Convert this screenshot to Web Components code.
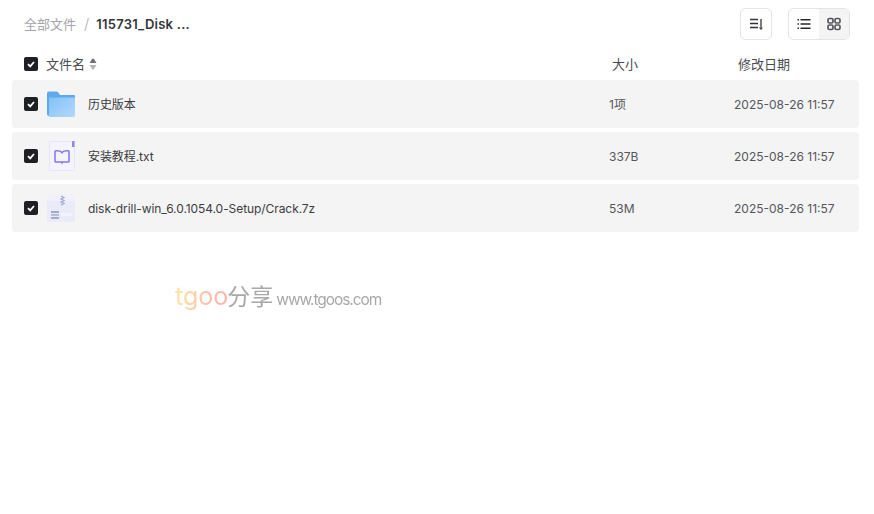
<!DOCTYPE html>
<html lang="zh">
<head>
<meta charset="utf-8">
<title>全部文件</title>
<style>
    html, body { margin: 0; height: 100%; background: #fff; }
    body { font-family: Inter, "Noto Sans CJK SC", sans-serif; color: #25262b; overflow: hidden; }
</style>
</head>
<body>
<file-page>
    <file-row slot="rows" name="历史版本" size="1项" date="2025-08-26 11:57"><file-icon kind="folder"></file-icon></file-row>
    <file-row slot="rows" name="安装教程.txt" size="337B" date="2025-08-26 11:57"><file-icon kind="text"></file-icon></file-row>
    <file-row slot="rows" name="disk-drill-win_6.0.1054.0-Setup/Crack.7z" size="53M" date="2025-08-26 11:57"><file-icon kind="zip"></file-icon></file-row>
</file-page>

<script>
const icons = {
    folder: `<svg width="30" height="28" viewBox="0 0 30 28">
        <defs><linearGradient id="f" x1="0" y1="0" x2="1" y2="1"><stop offset="0" stop-color="#84c1f7"/><stop offset="1" stop-color="#b3d9fc"/></linearGradient></defs>
        <path d="M1 3.500C1 2.400 1.800 1.500 3 1.500h7.500c.8 0 1.300.3 1.800 1l1.700 2.500h14c.6 0 1 .4 1 1V26H3c-1.200 0-2-.8-2-2z" fill="#5eaaee"/>
        <path d="M3 7.500h26V25.500c0 .8-.6 1.500-1.500 1.500H4.500C3.600 27 3 26.400 3 25.500z" fill="url(#f)"/>
        <rect x="23" y="9.500" width="4" height="2" rx="1" fill="#a4cdf4"/>
    </svg>`,
    text: `<svg width="30" height="32" viewBox="0 0 30 32">
        <path d="M3.500 1.500h25V29c0 .8-.6 1.500-1.500 1.500H5c-.9 0-1.500-.6-1.500-1.500z" fill="#f5f3ff" stroke="#e6e3fb"/>
        <rect x="26" y="1" width="2.500" height="6" rx=".6" fill="#8d86ee"/>
        <path d="M11 10.800H9.800c-.5 0-.8.300-.8.800v9.600c0 .5.300.8.800.8h12.400c.5 0 .8-.3.800-.8v-9.600c0-.5-.3-.8-.8-.8H21M16 22v1.800" fill="none" stroke="#7f78ea" stroke-width="1.500"/>
        <path d="M11 10.800c2 0 4 .4 5 1.800 1-1.400 3-1.800 5-1.800" fill="none" stroke="#7f78ea" stroke-width="1.500"/>
    </svg>`,
    zip: `<svg width="30" height="30" viewBox="0 0 30 30">
        <path d="M1 8l3.500-6.500C4.700 1.100 5 1 5.500 1h19c.5 0 .8.100 1 .5L29 8v19.500c0 1-.6 1.500-1.500 1.500h-25C1.600 29 1 28.500 1 27.500z" fill="#e9ebf8"/>
        <path d="M1 8l3.500-6.500C4.700 1.100 5 1 5.500 1h19c.5 0 .8.100 1 .5L29 8z" fill="#f0f1fa"/>
        <path d="M15 3l3 1.500-3 1.500 3 1.500-3 1.500 3 1.500-3 1.500" fill="none" stroke="#a6abcb" stroke-width="1.300"/>
        <rect x="5" y="18" width="8" height="2" fill="#a3a9c6"/>
        <rect x="5" y="21" width="8" height="2" fill="#b8bdd5"/>
        <rect x="5" y="24" width="8" height="2" fill="#a3a9c6"/>
        <rect x="15" y="20" width="11" height="3" fill="#f3f4fb"/>
    </svg>`
};

customElements.define('file-icon', class extends HTMLElement {
    constructor() {
        super();
        this.attachShadow({mode: 'open'});
    }
    connectedCallback() {
        this.shadowRoot.innerHTML = `
            <style>
                :host { display: flex; width: 30px; height: 32px; align-items: center; justify-content: center; }
                svg { display: block; }
            </style>
            ${icons[this.getAttribute('kind')]}`;
    }
});

customElements.define('check-box', class extends HTMLElement {
    constructor() {
        super();
        this.attachShadow({mode: 'open'}).innerHTML = `
            <style>
                :host { display: flex; width: 14px; height: 14px; border-radius: 2px; background: #1f2024; align-items: center; justify-content: center; flex: none; }
            </style>
            <svg width="10" height="10" viewBox="0 0 10 10"><path d="M2 5.200l2.200 2.200L8 3" fill="none" stroke="#fff" stroke-width="1.800"/></svg>`;
    }
});

customElements.define('file-row', class extends HTMLElement {
    constructor() {
        super();
        this.attachShadow({mode: 'open'});
    }
    connectedCallback() {
        this.shadowRoot.innerHTML = `
            <style>
                :host { display: grid; grid-template-columns: 585px 125px 1fr; align-items: center; height: 48px; padding-left: 12px; background: #f4f4f4; border-radius: 4px; font-size: 12px; line-height: 16px; color: #55565c; }
                .name { display: flex; align-items: center; }
                span { padding-top: 2px; }
                ::slotted(file-icon) { margin: 0 12px 0 8px; }
                .title { color: #3b3c42; letter-spacing: -.07px; }
            </style>
            <div class="name"><check-box></check-box><slot></slot><span class="title">${this.getAttribute('name')}</span></div>
            <span>${this.getAttribute('size')}</span>
            <span>${this.getAttribute('date')}</span>`;
    }
});

customElements.define('view-tools', class extends HTMLElement {
    constructor() {
        super();
        this.attachShadow({mode: 'open'}).innerHTML = `
            <style>
                :host { display: flex; gap: 16px; align-items: center; }
                .box { display: flex; height: 30px; border: 1px solid #e4e4e6; border-radius: 6px; overflow: hidden; }
                .btn { display: flex; width: 30px; height: 30px; align-items: center; justify-content: center; }
                .off { background: #f4f4f5; }
                svg { display: block; }
            </style>
            <div class="box"><div class="btn">
                <svg width="16" height="16" viewBox="0 0 16 16" fill="none" stroke="#33343a" stroke-width="1.300"><path d="M2 3.500h8M2 7.500h8M2 11.500h8M13 3v10"/><path d="M11.500 11.500L13 13.500l1.300-2" stroke-width="1"/></svg>
            </div></div>
            <div class="box"><div class="btn">
                <svg width="14" height="14" viewBox="0 0 14 14" fill="none" stroke="#25262b" stroke-width="1.400"><path d="M3.500 2.800h10M3.500 7h10M3.500 11.200h10M.5 2.800h1.500M.5 7h1.500M.5 11.200h1.500"/></svg>
            </div><div class="btn off">
                <svg width="14" height="14" viewBox="0 0 14 14" fill="none" stroke="#55565c" stroke-width="1.700"><rect x="1" y="1.500" width="5" height="4.500" rx="1.500"/><rect x="8" y="1.500" width="5" height="4.500" rx="1.500"/><rect x="1" y="8" width="5" height="4.500" rx="1.500"/><rect x="8" y="8" width="5" height="4.500" rx="1.500"/></svg>
            </div></div>`;
    }
});

customElements.define('file-page', class extends HTMLElement {
    constructor() {
        super();
        this.attachShadow({mode: 'open'}).innerHTML = `
            <style>
                :host { display: block; position: relative; height: 514px; padding: 8px 15px 0 12px; box-sizing: border-box; }
                .top { display: flex; justify-content: space-between; align-items: center; height: 32px; padding: 0 9px 0 12px; }
                .crumb { display: flex; align-items: center; font-size: 13px; line-height: 20px; }
                .crumb .root { color: #a3a3a8; }
                .crumb .sep { color: #b0b0b4; margin: 0 7px 0 8px; font-weight: 300; font-size: 15px; }
                .crumb b { font-weight: 600; color: #33343a; letter-spacing: .25px; }
                .head { display: grid; grid-template-columns: 588px 126px 1fr; align-items: center; height: 40px; box-sizing: border-box; padding: 8px 0 0 12px; font-size: 13px; line-height: 18px; color: #4a4b52; }
                .head .name { display: flex; align-items: center; gap: 8px; }
                .sort { margin-left: -4px; }
                .rows { display: flex; flex-direction: column; gap: 4px; }
                .mark { position: absolute; left: 175px; top: 278px; display: flex; align-items: baseline; white-space: nowrap; color: #a8a8a8; filter: blur(.4px); }
                .mark .t { font-size: 25px; background: linear-gradient(90deg, #fde6a6, #fdbfa9 60%, #fbb4ac); -webkit-background-clip: text; background-clip: text; color: transparent; }
                .mark .cn { font-size: 23px; margin-left: -1px; }
                .mark .url { font-size: 15.5px; margin-left: 3px; letter-spacing: -1.05px; }
            </style>
            <div class="top">
                <div class="crumb"><span class="root">全部文件</span><span class="sep">/</span><b>115731_Disk ...</b></div>
                <view-tools></view-tools>
            </div>
            <div class="head">
                <div class="name"><check-box></check-box><span>文件名</span>
                    <svg class="sort" width="8" height="12" viewBox="0 0 8 12"><path d="M4 .5c.4 0 .7.2 1 .6L7.500 5h-7L3 1.100C3.300.7 3.600.5 4 .5z" fill="#707176"/><path d="M4 11.500c.4 0 .7-.2 1-.6L7.500 7h-7L3 10.900c.3.4.6.6 1 .6z" fill="#b5b5b8"/></svg>
                </div>
                <span>大小</span>
                <span>修改日期</span>
            </div>
            <div class="rows"><slot name="rows"></slot></div>
            <div class="mark"><span class="t">tgoo</span><span class="cn">分享</span><span class="url">www.tgoos.com</span></div>`;
    }
});
</script>
</body>
</html>
